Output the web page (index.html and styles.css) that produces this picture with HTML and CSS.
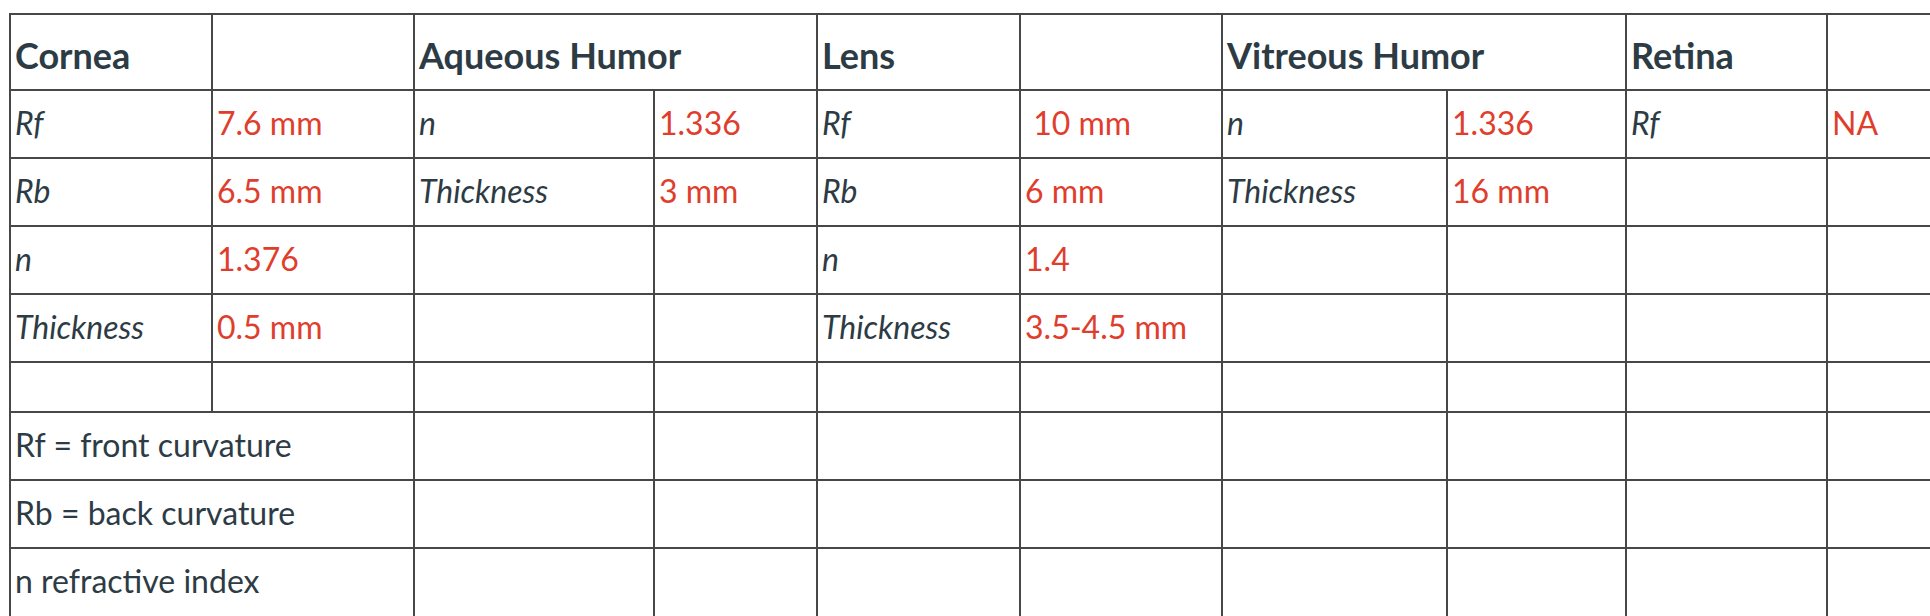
FILE: index.html
```html
<!DOCTYPE html>
<html lang="en">
<head>
<meta charset="utf-8">
<title>Eye optics</title>
<link rel="stylesheet" href="styles.css">
</head>
<body>
<table class="eye">
  <colgroup>
    <col class="c202"><col class="c202"><col class="c240"><col class="c163"><col class="c203">
    <col class="c202"><col class="c225"><col class="c179"><col class="c201"><col class="c202">
  </colgroup>
  <tbody>
    <tr class="head">
      <td>Cornea</td><td></td>
      <td colspan="2">Aqueous Humor</td>
      <td>Lens</td><td></td>
      <td colspan="2">Vitreous Humor</td>
      <td>Retina</td><td></td>
    </tr>
    <tr>
      <td class="lbl">Rf</td><td class="val">7.6 mm</td>
      <td class="lbl">n</td><td class="val">1.336</td>
      <td class="lbl">Rf</td><td class="val">&nbsp;10 mm</td>
      <td class="lbl">n</td><td class="val">1.336</td>
      <td class="lbl">Rf</td><td class="val">NA</td>
    </tr>
    <tr>
      <td class="lbl">Rb</td><td class="val">6.5 mm</td>
      <td class="lbl">Thickness</td><td class="val">3 mm</td>
      <td class="lbl">Rb</td><td class="val">6 mm</td>
      <td class="lbl">Thickness</td><td class="val">16 mm</td>
      <td></td><td></td>
    </tr>
    <tr>
      <td class="lbl">n</td><td class="val">1.376</td>
      <td></td><td></td>
      <td class="lbl">n</td><td class="val">1.4</td>
      <td></td><td></td><td></td><td></td>
    </tr>
    <tr>
      <td class="lbl">Thickness</td><td class="val">0.5 mm</td>
      <td></td><td></td>
      <td class="lbl">Thickness</td><td class="val">3.5-4.5 mm</td>
      <td></td><td></td><td></td><td></td>
    </tr>
    <tr class="blank">
      <td></td><td></td><td></td><td></td><td></td><td></td><td></td><td></td><td></td><td></td>
    </tr>
    <tr>
      <td colspan="2">Rf = front curvature</td>
      <td></td><td></td><td></td><td></td><td></td><td></td><td></td><td></td>
    </tr>
    <tr>
      <td colspan="2">Rb = back curvature</td>
      <td></td><td></td><td></td><td></td><td></td><td></td><td></td><td></td>
    </tr>
    <tr class="last">
      <td colspan="2">n refractive index</td>
      <td></td><td></td><td></td><td></td><td></td><td></td><td></td><td></td>
    </tr>
  </tbody>
</table>
</body>
</html>
```

FILE: styles.css
```css
html, body {
  margin: 0;
  padding: 0;
  background: #ffffff;
  overflow: hidden;
}

body {
  padding: 13px 0 0 9px;
  font-family: Lato, "Noto Sans", sans-serif;
  color: #2d3b45;
}

.eye {
  border-collapse: separate;
  border-spacing: 0;
  table-layout: fixed;
  width: 2021px;
  border-top: 2px solid #474747;
  border-left: 2px solid #474747;
}

.c202 { width: 202px; }
.c240 { width: 240px; }
.c163 { width: 163px; }
.c203 { width: 203px; }
.c225 { width: 225px; }
.c179 { width: 179px; }
.c201 { width: 201px; }

.eye td {
  box-sizing: border-box;
  border-right: 2px solid #474747;
  border-bottom: 2px solid #474747;
  padding: 8px 4px 0 4px;
  vertical-align: top;
  font-size: 32px;
  line-height: 48px;
  white-space: nowrap;
  overflow: hidden;
}

.eye tr { height: 68px; }
.eye tr.head { height: 76px; }
.eye tr.blank { height: 50px; }
.eye tr.last { height: 76px; }

.eye tr.head td {
  font-size: 36px;
  font-weight: 700;
  padding-top: 16px;
}

.eye td.lbl { font-style: italic; }
.eye td.val { color: #e03e2d; }
```
